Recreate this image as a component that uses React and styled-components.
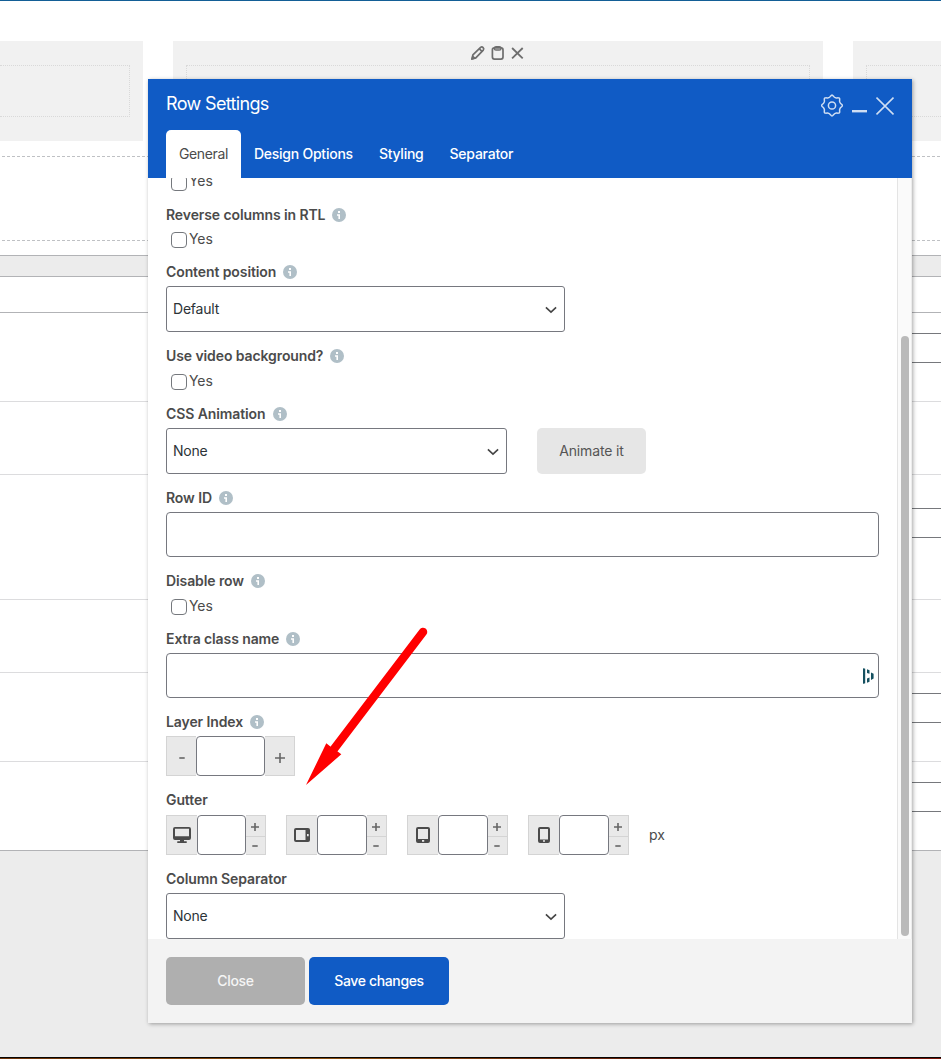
import React from 'react';
import styled, { createGlobalStyle } from 'styled-components';

const GlobalStyle = createGlobalStyle`
  * {
    box-sizing: border-box;
  }
  body {
    margin: 0;
    overflow: hidden;
    background: #ececec;
    color: #4b4b4b;
    font-family: Inter, "Liberation Sans", sans-serif;
    font-size: 14px;
  }
`

const Page = styled.div`
  position: relative;
  display: flex;
  flex-direction: column;
  width: 941px;
  height: 1059px;
  overflow: hidden;
`

/* editor behind the dialog */
const Builder = styled.div`
  height: 256px;
  padding-top: 40px;
  background: white;
  border-top: 1px solid #135e96;
  border-bottom: 1px solid #b2b3b6;
`
const Columns = styled.div`
  display: flex;
  gap: 30px;
  height: 100px;
`
const Column = styled.div`
  width: ${props => props.$width}px;
  padding: 24px ${props => props.$right ?? 13}px 0 ${props => props.$left ?? 13}px;
  background: #f1f1f1;
  display: flex;
  flex-direction: column;
  position: relative;
`
const ColumnInner = styled.div`
  height: 52px;
  border: 1px dotted #d9d9d9;
  border-left-width: ${props => (props.$openLeft ? 0 : 1)}px;
  border-right-width: ${props => (props.$openRight ? 0 : 1)}px;
`
const ColumnTools = styled.div`
  position: absolute;
  top: 4px;
  left: 297px;
  display: flex;
  gap: 4px;
  color: #6e6e6e;
`
const DropArea = styled.div`
  height: 85px;
  margin: 15px 0 0 2px;
  background: repeating-linear-gradient(90deg, #bfc1c4 0 3px, transparent 3px 5px) top / 100% 1px no-repeat,
    repeating-linear-gradient(90deg, #bfc1c4 0 3px, transparent 3px 5px) bottom / 100% 1px no-repeat;
`
const MetaBox = styled.div`
  height: 575px;
  margin-top: 20px;
  background: white;
  border-top: 1px solid #b2b3b6;
  border-bottom: 1px solid #b2b3b6;
`
const MetaHeader = styled.div`
  height: 36px;
  border-bottom: 1px solid #b2b3b6;
`
const MetaRow = styled.div`
  height: ${props => props.$height}px;
  padding: ${props => props.$top ?? 20}px 0 0 600px;
  border-bottom: 1px solid ${props => (props.$last ? 'transparent' : '#dcdcde')};
`
const MetaInput = styled.div`
  height: 30px;
  border: 1px solid #76787c;
  border-right: 0;
`
const Dock = styled.div`
  height: 2px;
  margin-top: auto;
  background: linear-gradient(90deg, #6b3208, #8a4f10 35%, #5a1408 75%, #7a1408);
  border-top: 1px solid #050505;
`

/* dialog */
const Dialog = styled.div`
  position: absolute;
  top: 79px;
  left: 148px;
  width: 764px;
  height: 944px;
  display: flex;
  flex-direction: column;
  background: white;
  box-shadow: 1px 1px 4px rgba(0, 0, 0, .35);
`
const Header = styled.div`
  height: 99px;
  flex: none;
  padding: 0 18px;
  display: flex;
  flex-direction: column;
  justify-content: space-between;
  background: #105bc5;
  color: white;
`
const TitleBar = styled.div`
  display: flex;
  justify-content: space-between;
`
const Title = styled.h1`
  margin: 14px 0 0;
  font-size: 18px;
  line-height: 22px;
  font-weight: 400;
  letter-spacing: -.65px;
`
const WindowTools = styled.div`
  display: flex;
  gap: 9px;
  margin-top: 15px;
  color: #cfdef3;
`
const Tabs = styled.div`
  display: flex;
`
const Tab = styled.div`
  height: 48px;
  padding: 0 13px;
  border-radius: 5px 5px 0 0;
  background: ${props => (props.$active ? 'white' : 'transparent')};
  color: ${props => (props.$active ? '#4b4b4b' : 'white')};
  font-weight: ${props => (props.$active ? 400 : 500)};
  line-height: 48px;
  letter-spacing: ${props => props.$spacing ?? -.24}px;
  white-space: nowrap;
`
const Body = styled.div`
  height: 761px;
  flex: none;
  display: flex;
  overflow: hidden;
`
const Form = styled.div`
  width: 749px;
  margin-top: -7px;
  padding: 0 18px;
  display: flex;
  flex-direction: column;
  gap: 14px;
`
const Field = styled.div`
  display: flex;
  flex-direction: column;
  gap: 4px;
  flex: none;
`
const Label = styled.div`
  height: 20px;
  display: flex;
  align-items: center;
  gap: 7px;
  font-weight: 600;
  line-height: 20px;
  letter-spacing: -.1px;
`
const CheckRow = styled.label`
  height: ${props => props.$height ?? 20}px;
  padding-left: 5px;
  display: flex;
  align-items: flex-end;
  gap: 2px;
  line-height: ${props => props.$lineHeight ?? 19}px;
  letter-spacing: -.1px;
`
const Box = styled.span`
  width: 16px;
  height: 16px;
  border: 1px solid #75787d;
  border-radius: 4px;
  background: white;
`
const Inline = styled.div`
  display: flex;
  gap: 30px;
`
const SelectBox = styled.div`
  width: ${props => props.$width}px;
  height: 46px;
  padding: 0 7px 0 6px;
  display: flex;
  align-items: center;
  justify-content: space-between;
  border: 1px solid #76787f;
  border-radius: 3px;
  color: #2c3338;
  letter-spacing: -.22px;
`
const SelectValue = styled.span`
  padding-bottom: 2px;
`
const TextInput = styled.div`
  height: 45px;
  padding-right: 4px;
  display: flex;
  align-items: center;
  justify-content: flex-end;
  border: 1px solid #76787f;
  border-radius: 4px;
`
const AnimateButton = styled.button`
  width: 109px;
  height: 46px;
  padding: 0 0 2px;
  border: none;
  border-radius: 5px;
  background: #e6e6e6;
  color: #555;
  font: inherit;
  letter-spacing: -.13px;
`
const Stepper = styled.div`
  display: flex;
  height: 40px;
`
const StepCell = styled.div`
  width: ${props => props.$width}px;
  padding-top: ${props => props.$drop ?? 0}px;
  display: flex;
  align-items: center;
  justify-content: center;
  background: #e9e9e9;
  border: 1px solid #d4d4d4;
  border-left-width: ${props => (props.$side === 'right' ? 0 : 1)}px;
  border-right-width: ${props => (props.$side === 'left' ? 0 : 1)}px;
  color: #666;
`
const StepInput = styled.div`
  width: ${props => props.$width}px;
  border: 1px solid #76787f;
  border-radius: 4px;
  background: white;
`
const StepColumn = styled.div`
  width: 20px;
  display: flex;
  flex-direction: column;
  border: 1px solid #d4d4d4;
  border-left: 0;
  background: #e9e9e9;
  color: #666;
`
const StepHalf = styled.div`
  flex: 1;
  padding: 3px 1px 0 0;
  display: flex;
  align-items: center;
  justify-content: center;
  & + & {
    padding-top: 1px;
    border-top: 1px solid #d4d4d4;
  }
`
const GutterRow = styled.div`
  display: flex;
  align-items: center;
  gap: 20px;
  margin-top: 1px;
`
const Unit = styled.span`
  padding-bottom: 2px;
`
const Scrollbar = styled.div`
  width: 15px;
  padding: 158px 2px 3px 3px;
  background: #fafafa;
  border-left: 1px solid #e4e4e4;
  border-right: 1px solid #ececec;
`
const Thumb = styled.div`
  width: 8px;
  height: 600px;
  border-radius: 4px;
  background: #bababa;
`
const Footer = styled.div`
  flex: 1;
  padding: 18px;
  display: flex;
  gap: 4px;
  background: #f3f3f3;
`
const FooterButton = styled.button`
  width: ${props => (props.$primary ? 140 : 139)}px;
  height: 48px;
  padding: 0 0 2px;
  border: none;
  border-radius: 5px;
  background: ${props => (props.$primary ? '#105bc5' : '#afafaf')};
  color: ${props => (props.$primary ? 'white' : '#f5f5f5')};
  font: inherit;
  font-weight: 500;
  letter-spacing: -.35px;
`
const Arrow = styled.svg`
  position: absolute;
  top: 620px;
  left: 300px;
`

// scalloped outline of the cog, eight lobes
const cogPath = Array.from({ length: 96 }, (_, i) => {
  const a = (i / 96) * Math.PI * 2
  const r = 9.3 + 0.9 * Math.cos(a * 8) + 0.15 * Math.cos(a * 16)
  return `${i ? 'L' : 'M'}${(11 + r * Math.cos(a)).toFixed(2)} ${(11 + r * Math.sin(a)).toFixed(2)}`
}).join('') + 'Z'

const CogIcon = () => (
  <svg width="22" height="23" viewBox="0 -.5 22 23" fill="none" stroke="currentColor" strokeWidth="1.5">
    <path d={cogPath} />
    <circle cx="11" cy="11" r="3.6" />
  </svg>
)

const MinimizeIcon = () => (
  <svg width="15" height="22" viewBox="0 0 15 22">
    <path d="M0 16h15v2.400H0z" fill="currentColor" />
  </svg>
)

const CloseIcon = () => (
  <svg width="18" height="22" viewBox="0 0 18 22" fill="none" stroke="currentColor" strokeWidth="1.6">
    <path d="M.5 3.5l17 17M17.5 3.5l-17 17" />
  </svg>
)

const PencilIcon = () => (
  <svg width="16" height="16" viewBox="0 0 16 16" fill="none" stroke="currentColor" strokeWidth="1.7" strokeLinejoin="round">
    <path d="M1.9 14l1-4.100 7.700-7.500q1.300-1 2.500.2t.2 2.500L5.800 12.900z" />
    <path d="M9.400 3.800l2.800 2.800" />
    <path d="M1 15l1.500-5 3.700 3.600z" fill="currentColor" stroke="none" />
  </svg>
)

const ClipboardIcon = () => (
  <svg width="16" height="16" viewBox="0 0 16 16" fill="none" stroke="currentColor" strokeWidth="1.7">
    <rect x="2.4" y="2.9" width="10.6" height="11.2" rx="2" />
    <rect x="4.4" y="1.6" width="6.6" height="3.4" rx="1.6" strokeWidth="1.4" />
  </svg>
)

const CrossIcon = () => (
  <svg width="16" height="16" viewBox="0 0 16 16" fill="none" stroke="currentColor" strokeWidth="1.8">
    <path d="M2.1 3l10.6 10.4M12.7 3L2.1 13.4" />
  </svg>
)

const InfoIcon = () => (
  <svg width="14" height="14" viewBox="0 0 14 14">
    <circle cx="7" cy="7" r="7" fill="#b0bfc7" />
    <path d="M6 3h2v2H6zM5 6.2h3V11H6.4V7.8H5z" fill="white" />
  </svg>
)

const Chevron = () => (
  <svg width="12" height="12" viewBox="0 0 12 12" fill="none" stroke="#444" strokeWidth="1.6">
    <path d="M.9 4.4l5.1 4.800 5.100-4.800" />
  </svg>
)

const PasswordIcon = () => (
  <svg width="12" height="16" viewBox="0 0 12 16" fill="#14505f">
    <path d="M1 .8q0-.8.800-.6l1.400.5v14.600l-1.400.5q-.8.200-.8-.6z" />
    <path d="M5 1.200l2.500 1v3.600L5 4.900zM5 10.600l2.500-1v4.200l-2.500 1zM9 4.400l2.600 1.300v4.800L9 12z" />
  </svg>
)

const deviceIcons = {
  desktop: (
    <svg width="18" height="16" viewBox="0 0 18 16">
      <path fill="#4b4b4b" fillRule="evenodd" d="M2 0h14q2 0 2 2v9q0 2-2 2h-5v1.200h2q1 0 1 .9t-1 .9H5q-1 0-1-.9t1-.9h2V13H2q-2 0-2-2V2q0-2 2-2zm0 1.700V9.200h14V1.700z" />
    </svg>
  ),
  landscape: (
    <svg width="16" height="14" viewBox="0 0 16 14">
      <path fill="#4b4b4b" fillRule="evenodd" d="M2 0h12q2 0 2 2v10q0 2-2 2H2q-2 0-2-2V2q0-2 2-2zm0 2v10h9.500V2zm11 4v2.200h1.700V6z" />
    </svg>
  ),
  portrait: (
    <svg width="14" height="16" viewBox="0 0 14 16">
      <path fill="#4b4b4b" fillRule="evenodd" d="M2 0h10q2 0 2 2v12q0 2-2 2H2q-2 0-2-2V2q0-2 2-2zm0 2v10h10V2zm4 11v1.700h2.200V13z" />
    </svg>
  ),
  phone: (
    <svg width="12" height="16" viewBox="0 0 12 16">
      <path fill="#4b4b4b" fillRule="evenodd" d="M2 0h8q2 0 2 2v12q0 2-2 2H2q-2 0-2-2V2q0-2 2-2zm0 2v10.400h8V2zm3 11.200v1.600h2v-1.600z" />
    </svg>
  ),
}

const Sign = ({ plus, size = 8 }) => (
  <svg width={size} height={size} viewBox={`0 0 ${size} ${size}`} stroke="currentColor" strokeWidth="1.6">
    {plus
      ? <path d={`M0 ${size / 2}H${size}M${size / 2} 0V${size}`} />
      : <path d={`M${size / 2 - 2.7} ${size / 2}h5.400`} />}
  </svg>
)

const gutters = [
  { device: 'desktop', input: 49 },
  { device: 'landscape', input: 50 },
  { device: 'portrait', input: 50 },
  { device: 'phone', input: 50 },
]

function FieldLabel({ children, info = true }) {
  return <Label><span>{children}</span>{info && <InfoIcon />}</Label>
}

function Checkbox({ height, lineHeight }) {
  return <CheckRow $height={height} $lineHeight={lineHeight}><Box />Yes</CheckRow>
}

function Select({ width, value }) {
  return <SelectBox $width={width}><SelectValue>{value}</SelectValue><Chevron /></SelectBox>
}

function Backdrop() {
  return (
    <>
      <Builder>
        <Columns>
          <Column $width={143} $left={0}><ColumnInner $openLeft /></Column>
          <Column $width={650}>
            <ColumnTools><PencilIcon /><ClipboardIcon /><CrossIcon /></ColumnTools>
            <ColumnInner />
          </Column>
          <Column $width={88} $right={0}><ColumnInner $openRight /></Column>
        </Columns>
        <DropArea />
      </Builder>
      <MetaBox>
        <MetaHeader />
        <MetaRow $height={89}><MetaInput /></MetaRow>
        <MetaRow $height={73} />
        <MetaRow $height={125} $top={33}><MetaInput /></MetaRow>
        <MetaRow $height={73} />
        <MetaRow $height={89}><MetaInput /></MetaRow>
        <MetaRow $height={88} $last><MetaInput /></MetaRow>
      </MetaBox>
      <Dock />
    </>
  )
}

export default function App() {
  return (
    <Page>
      <GlobalStyle />
      <Backdrop />
      <Dialog>
        <Header>
          <TitleBar>
            <Title>Row Settings</Title>
            <WindowTools><CogIcon /><MinimizeIcon /><CloseIcon /></WindowTools>
          </TitleBar>
          <Tabs>
            <Tab $active $spacing={-0.38}>General</Tab>
            <Tab>Design Options</Tab>
            <Tab>Styling</Tab>
            <Tab>Separator</Tab>
          </Tabs>
        </Header>
        <Body>
          <Form>
            <Checkbox lineHeight={21} />
            <Field>
              <FieldLabel>Reverse columns in RTL</FieldLabel>
              <Checkbox height={19} />
            </Field>
            <Field>
              <FieldLabel>Content position</FieldLabel>
              <Select width={399} value="Default" />
            </Field>
            <Field>
              <FieldLabel>Use video background?</FieldLabel>
              <Checkbox />
            </Field>
            <Field>
              <FieldLabel>CSS Animation</FieldLabel>
              <Inline>
                <Select width={341} value="None" />
                <AnimateButton>Animate it</AnimateButton>
              </Inline>
            </Field>
            <Field>
              <FieldLabel>Row ID</FieldLabel>
              <TextInput />
            </Field>
            <Field>
              <FieldLabel>Disable row</FieldLabel>
              <Checkbox />
            </Field>
            <Field>
              <FieldLabel>Extra class name</FieldLabel>
              <TextInput><PasswordIcon /></TextInput>
            </Field>
            <Field>
              <FieldLabel>Layer Index</FieldLabel>
              <Stepper>
                <StepCell $width={30} $side="left" $drop={3}><Sign size={10} /></StepCell>
                <StepInput $width={69} />
                <StepCell $width={30} $side="right" $drop={3}><Sign plus size={10} /></StepCell>
              </Stepper>
            </Field>
            <Field>
              <FieldLabel info={false}>Gutter</FieldLabel>
              <GutterRow>
                {gutters.map(({ device, input }) => (
                  <Stepper key={device}>
                    <StepCell $width={31} $side="left">{deviceIcons[device]}</StepCell>
                    <StepInput $width={input} />
                    <StepColumn>
                      <StepHalf><Sign plus /></StepHalf>
                      <StepHalf><Sign /></StepHalf>
                    </StepColumn>
                  </Stepper>
                ))}
                <Unit>px</Unit>
              </GutterRow>
            </Field>
            <Field>
              <FieldLabel info={false}>Column Separator</FieldLabel>
              <Select width={399} value="None" />
            </Field>
          </Form>
          <Scrollbar><Thumb /></Scrollbar>
        </Body>
        <Footer>
          <FooterButton>Close</FooterButton>
          <FooterButton $primary>Save changes</FooterButton>
        </Footer>
      </Dialog>
      <Arrow width="140" height="170" viewBox="300 620 140 170">
        <path d="M423 632L334 749" stroke="#ff0000" strokeWidth="8.5" strokeLinecap="round" />
        <path d="M306 785l20.300-41.700 4.400 3.400 6.600 4.600 4 3z" fill="#ff0000" />
      </Arrow>
    </Page>
  )
}
